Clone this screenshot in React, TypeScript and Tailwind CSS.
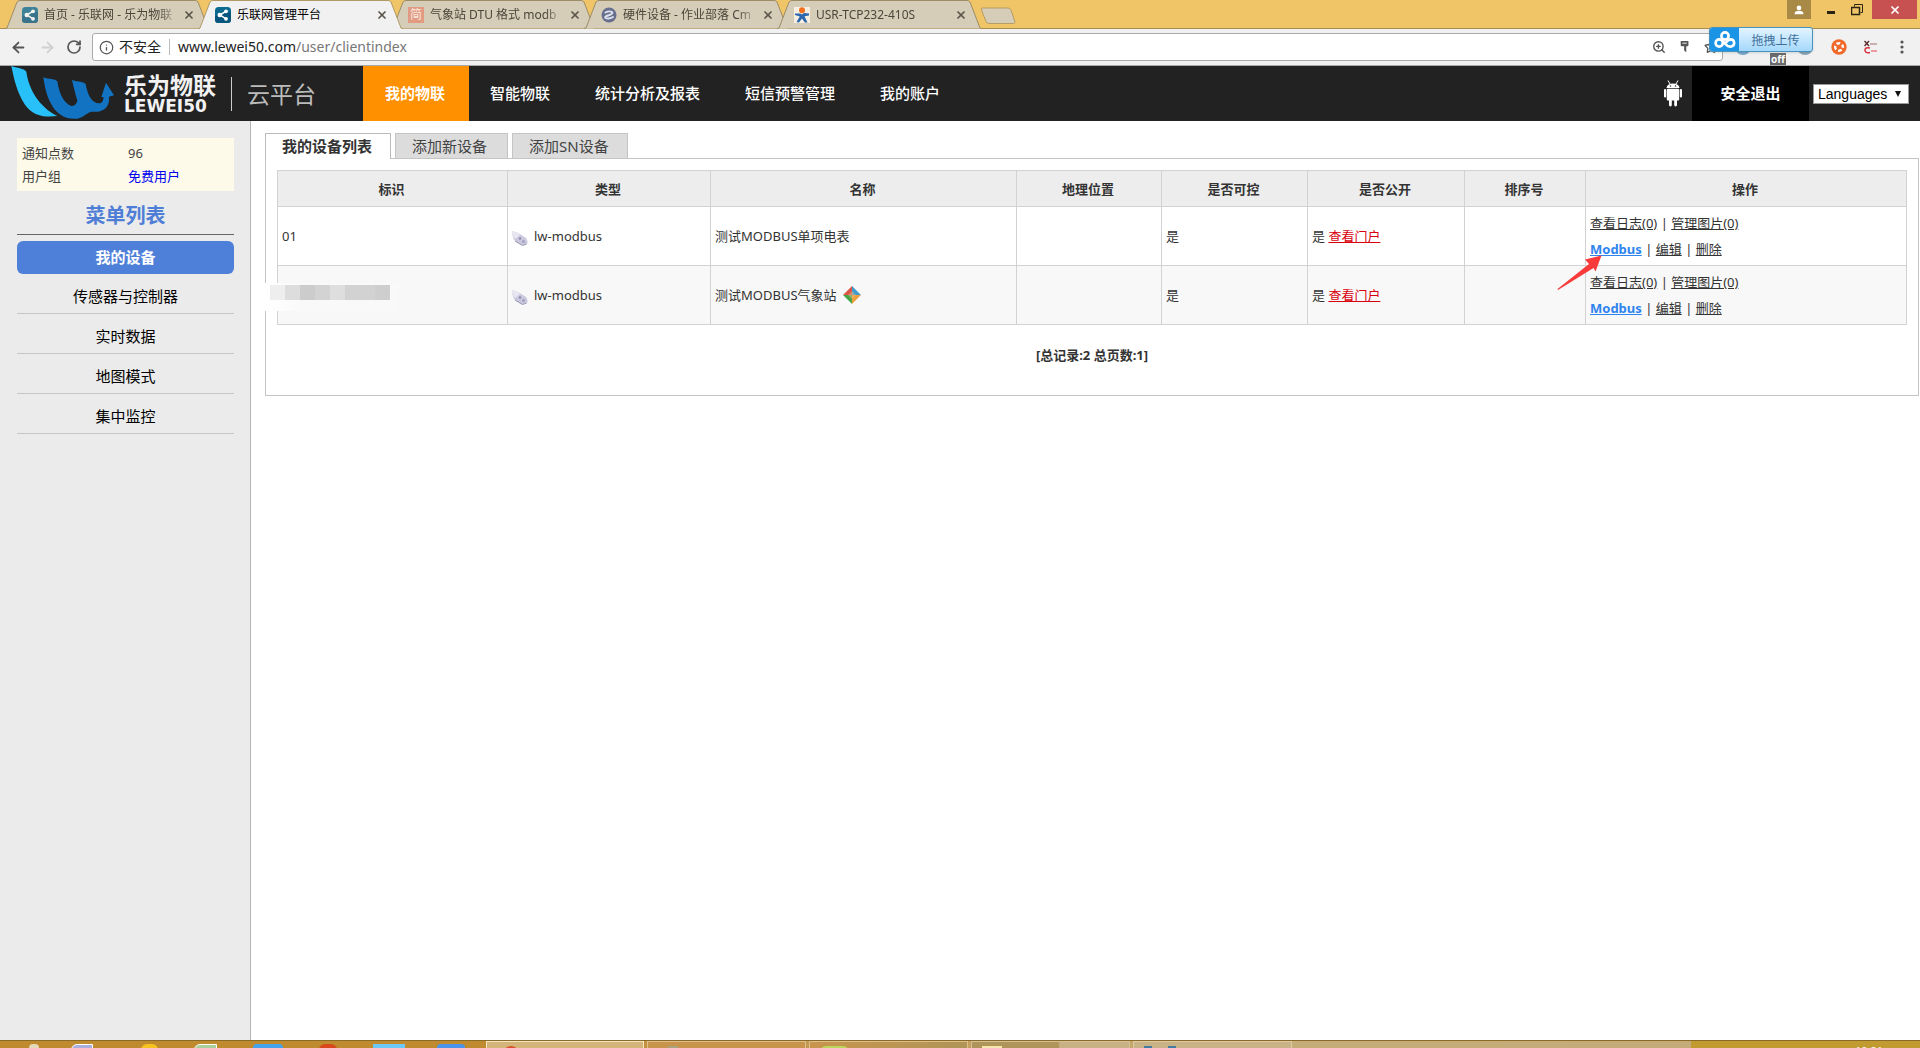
import type { ReactNode } from "react";
import { ArrowLeft, ArrowRight, RotateCw, Info, ZoomIn, Star, X } from "lucide-react";

type Tab = { title: string; icon: ReactNode; active?: boolean };

const ShareIcon = ({ dim }: { dim?: boolean }) => (
  <svg viewBox="0 0 16 16" className={dim ? "size-4 opacity-75" : "size-4"}>
    <rect width="16" height="16" rx="3.5" fill="#0b6a8f" />
    <path d="M0 9 L16 5 V12.500 Q16 16 12.500 16 H3.500 Q0 16 0 12.500Z" fill="#06567e" />
    <path d="M11 4.200 L5 8 L11 11.800" fill="none" stroke="#fff" strokeWidth="1.500" />
    <circle cx="11" cy="4.300" r="1.900" fill="#fff" />
    <circle cx="4.700" cy="8" r="2.200" fill="#fff" />
    <circle cx="11" cy="11.800" r="1.900" fill="#fff" />
  </svg>
);

const JianIcon = () => (
  <span className="grid size-4 place-items-center bg-[#e29a83] text-[12px] leading-4 text-[#f8e9df]">简</span>
);

const CmdIcon = () => (
  <svg viewBox="0 0 16 16" className="size-4">
    <circle cx="8" cy="8" r="7.500" fill="#666f8e" />
    <path d="M4.500 5.500 Q8 3.500 11 5 Q12.500 6.500 8.500 8 Q3 9.500 4.500 11 Q8 12.500 12 10" fill="none" stroke="#dfe3ee" strokeWidth="1.900" strokeLinecap="round" />
  </svg>
);

const UsrIcon = () => (
  <svg viewBox="0 0 16 16" className="size-4">
    <rect width="16" height="16" fill="#f6eee0" />
    <path d="M1 6.500 L6 6.500 L8 7.500 L10 6 L15 6.500 L15 8.500 L10.500 9.300 L13.500 15.500 L10.800 15.500 L8 11.500 L5 15.500 L2.500 15 L5.800 9.500 L1 8Z" fill="#2c67ad" />
    <circle cx="8" cy="3.200" r="3" fill="#f0701c" />
  </svg>
);

const browserTabs: Tab[] = [
  { title: "首页 - 乐联网 - 乐为物联", icon: <ShareIcon dim /> },
  { title: "乐联网管理平台", icon: <ShareIcon />, active: true },
  { title: "气象站 DTU 格式 modb", icon: <JianIcon /> },
  { title: "硬件设备 - 作业部落 Cm", icon: <CmdIcon /> },
  { title: "USR-TCP232-410S", icon: <UsrIcon /> },
];

function BrowserTab({ tab }: { tab: Tab }) {
  return (
    <div className={tab.active ? "relative z-10 -mr-3 h-[29px] w-[205px]" : "relative -mr-3 h-[29px] w-[205px]"}>
      <svg viewBox="0 0 205 29" className="absolute inset-0 size-full" aria-hidden="true">
        <path
          d="M0 28.500 L2 28 L12 2 Q13 0.500 15 0.500 H190 Q192 0.500 193 2 L203 28 L205 28.500"
          fill={tab.active ? "#f1f1f1" : "#d6cdb8"}
          stroke={tab.active ? "#b09a66" : "#9c8d67"}
        />
        {tab.active && <rect x="2" y="28" width="201" height="1" fill="#f1f1f1" />}
      </svg>
      <div className="relative flex h-[29px] items-center pr-[15px] pl-[17px]">
        {tab.icon}
        <a
          href="#tab"
          className={
            tab.active
              ? "ml-1.5 flex-1 text-[12px] leading-5 whitespace-nowrap text-black"
              : "ml-1.5 flex-1 mask-r-from-85% text-[12px] leading-5 whitespace-nowrap text-[#4b463b]"
          }
        >
          {tab.title}
        </a>
        <button aria-label="关闭标签页" className="ml-1 grid size-3 place-items-center">
          <X className="size-3 text-[#5c574c]" strokeWidth={3.5} />
        </button>
      </div>
    </div>
  );
}

function TitleBar() {
  return (
    <div className="flex h-[29px] shrink-0 border-b border-[#a88c50] bg-[#efc568] pl-[5px]">
      {browserTabs.map((t) => (
        <BrowserTab key={t.title} tab={t} />
      ))}
      <button aria-label="新标签页" className="ml-2.5 h-[29px]">
        <svg viewBox="0 0 36 29" className="h-[29px] w-9">
          <path d="M2 8 H28 Q30 8 31 10 L35 22 Q35 23.500 33.500 23.500 H9 Q7 23.500 6 21.500 L1.500 10 Q1 8 2 8Z" fill="#d6cdb8" stroke="#b59c65" />
        </svg>
      </button>
      <div className="ml-auto flex h-[19px] pr-[3px]">
        <button aria-label="用户" className="mr-3 grid w-6 place-items-center bg-[#a88945]">
          <svg viewBox="0 0 12 12" className="size-2.5" fill="#fff">
            <circle cx="6" cy="3.500" r="2.800" />
            <path d="M0.500 11 Q1 7 6 7 Q11 7 11.500 11Z" />
          </svg>
        </button>
        <button aria-label="最小化" className="w-4">
          <span className="mx-auto mt-1.5 block h-[3px] w-2 bg-[#2b2414]" />
        </button>
        <button aria-label="还原" className="mr-[7px] ml-2.5 grid w-4 place-items-center">
          <svg viewBox="0 0 12 12" className="size-3" fill="none" stroke="#2b2414">
            <path d="M3.500 2.500 V0.500 H11.500 V8.500 H9.500" />
            <path d="M0.500 3.500 H8.500 V10.500 H0.500Z" strokeWidth="1.500" />
          </svg>
        </button>
        <button aria-label="关闭" className="grid w-[45px] place-items-center bg-[#c75050]">
          <X className="size-3 text-white" strokeWidth={3.5} />
        </button>
      </div>
    </div>
  );
}

function UploadWidget() {
  return (
    <button className="absolute top-[-2px] right-[107px] z-20 flex h-[25px] w-[104px] overflow-hidden rounded-[3px] border border-[#4793bd] bg-linear-to-b from-[#e2f4ff] to-[#a5d8fb] shadow">
      <span className="grid h-full w-[29px] place-items-center bg-[#1c94e6]">
        <svg viewBox="0 0 22 18" className="h-[18px] w-[22px]" fill="none" stroke="#fff" strokeWidth="2.600">
          <circle cx="11" cy="5" r="3.600" />
          <circle cx="5.200" cy="12" r="3.600" />
          <path d="M8.500 10 L12 13.500 Q14 16 16.800 15.600 Q20.200 15 20.200 12 Q20 8.400 16.500 8.400 Q14.500 8.500 11.500 12" />
        </svg>
      </span>
      <span className="flex-1 text-center text-[12px] leading-[25px] text-[#3f6f98]">拖拽上传</span>
    </button>
  );
}

function Toolbar() {
  return (
    <div className="relative flex h-[37px] shrink-0 items-center border-b border-[#a9a9a9] bg-[#f1f1f1] pr-4 pl-2.5">
      <button aria-label="后退"><ArrowLeft className="size-[17px] text-[#555]" strokeWidth={2.5} /></button>
      <button aria-label="前进" className="ml-3"><ArrowRight className="size-[17px] text-[#d0d0d0]" strokeWidth={2.5} /></button>
      <button aria-label="重新加载" className="ml-2.5"><RotateCw className="size-4 text-[#555]" strokeWidth={2.6} /></button>
      <div className="ml-2.5 flex h-7 flex-1 items-center rounded-[3px] border border-[#aaa] bg-white pl-1.5">
        <Info className="size-[15px] text-[#555]" strokeWidth={2} />
        <span className="ml-[5px] text-[14px] leading-5 text-[#222]">不安全</span>
        <span className="mx-2 h-4 w-px bg-[#bbb]" />
        <a href="#address" className="flex-1 text-[14px] leading-5 text-[#777]">
          <span className="text-[#222]">www.lewei50.com</span>/user/clientindex
        </a>
        <ZoomIn className="size-3.5 text-[#555]" strokeWidth={2.4} />
        <svg viewBox="0 0 10 14" className="ml-3.5 h-3 w-2.5" fill="#555">
          <path d="M0 0 H9 V5 Q9 6 8 6 H6.500 V13 L4 11 V6 H1 Q0 6 0 5Z" />
          <rect x="2" y="2" width="5" height="1" fill="#fff" />
        </svg>
        <Star className="mr-1 ml-3.5 size-3.5 text-[#555]" strokeWidth={2.2} />
      </div>
      <div className="flex w-[181px] items-center">
        <span className="ml-3 size-4 rounded-full bg-[#7aa9c9]" />
        <span className="mt-6 ml-[19px] h-3 bg-[#6b6b6b] px-px text-[10px] leading-3 font-bold text-white">off</span>
        <span className="ml-[11px] size-4 rounded-full bg-[#8ba6b8]" />
        <svg viewBox="0 0 16 16" className="ml-[18px] size-4">
          <circle cx="8" cy="8" r="7.700" fill="#f0692a" />
          <circle cx="8" cy="8" r="3.800" fill="none" stroke="#fff" strokeWidth="2.400" strokeDasharray="3.800 2.170" strokeDashoffset="3" />
        </svg>
        <svg viewBox="0 0 14 14" className="ml-[17px] size-3.5" fill="none">
          <path d="M0.500 1 L5 6 M5 1 L0.500 6" stroke="#5c2b2b" strokeWidth="1.400" />
          <path d="M6 4 H13" stroke="#b99" strokeWidth="1.500" />
          <path d="M6 8 Q1 7 1 10 Q1 13.500 6 12.500" stroke="#d6303c" strokeWidth="1.500" />
          <path d="M7 11 H13" stroke="#ef9aa2" strokeWidth="2" />
        </svg>
        <svg viewBox="0 0 4 14" className="ml-auto h-3.5 w-1" fill="#555">
          <circle cx="2" cy="2" r="1.600" />
          <circle cx="2" cy="7" r="1.600" />
          <circle cx="2" cy="12" r="1.600" />
        </svg>
      </div>
      <UploadWidget />
    </div>
  );
}

const nav = ["我的物联", "智能物联", "统计分析及报表", "短信预警管理", "我的账户"];

function Header() {
  return (
    <header className="flex h-[55px] shrink-0 items-stretch bg-[#222]">
      <a href="#home" className="flex w-[363px] items-center">
        <svg viewBox="0 12 360 165" className="h-[55px] w-[120px]" aria-hidden="true">
          <path d="M34 12 C50 19 72 18 79 29 C86 82 118 135 172 162 C128 167 98 160 75 128 C50 90 42 50 34 12Z" fill="#27c0f8" />
          <path d="M130 46 C148 53 165 50 172 58 C178 98 192 124 214 132 Q228 132 232 116 C226 96 221 76 216 54 C236 61 250 58 257 66 C262 98 276 126 300 124 C309 121 311 113 310 105 L304 105 L318 62 L342 100 L327 104 C330 134 312 153 274 149 C262 151 250 166 232 170 C168 176 140 120 130 46Z" fill="#1173c2" />
        </svg>
        <span className="ml-1 flex flex-col text-[#f2f2f2]">
          <span className="text-[23px] leading-[26px] font-bold">乐为物联</span>
          <span className="font-['DejaVu_Sans',sans-serif] text-[17px] leading-[17px] font-bold">LEWEI50</span>
        </span>
        <span className="ml-[15px] h-[34px] w-px bg-[#ccc]" />
        <span className="ml-[15px] text-[23px] leading-7 text-[#bbb]">云平台</span>
      </a>
      <nav className="flex">
        {nav.map((n, i) => (
          <a
            key={n}
            href="#nav"
            className={
              i === 0
                ? "flex items-center bg-[#ff9000] pr-6 pl-[22px] text-[15px] font-bold text-white"
                : "flex items-center pr-6 pl-[21px] text-[15px] font-medium text-white"
            }
          >
            {n}
          </a>
        ))}
      </nav>
      <div className="ml-auto flex items-center">
        <svg viewBox="0 0 18 27" className="mr-2.5 h-[27px] w-[18px]" fill="#fff">
          <path d="M2.500 8 Q3 3.500 9 3.500 Q15 3.500 15.500 8Z" />
          <path d="M4 0.500 L6 4 M14 0.500 L12 4" stroke="#fff" strokeWidth="1" />
          <rect x="2.800" y="8.800" width="12.400" height="11.700" rx="1" />
          <rect x="0" y="9" width="2.200" height="8.500" rx="1.100" />
          <rect x="15.800" y="9" width="2.200" height="8.500" rx="1.100" />
          <rect x="5" y="19" width="2.800" height="7.500" rx="1.400" />
          <rect x="10.200" y="19" width="2.800" height="7.500" rx="1.400" />
          <circle cx="6.500" cy="6" r="0.700" fill="#222" />
          <circle cx="11.500" cy="6" r="0.700" fill="#222" />
        </svg>
        <a href="#logout" className="flex h-full w-[117px] items-center justify-center bg-black text-[15px] font-bold text-white">安全退出</a>
        <div className="relative mr-[11px] ml-1">
          <select aria-label="Languages" className="block h-5 w-24 appearance-none border border-[#999] bg-white pl-1 font-['Liberation_Sans',sans-serif] text-[14px] leading-4 text-black">
            <option>Languages</option>
          </select>
          <svg viewBox="0 0 6 6" className="pointer-events-none absolute top-[7px] right-2 size-1.5">
            <path d="M0 0 H6 L3 6Z" fill="#111" />
          </svg>
        </div>
      </div>
    </header>
  );
}

const menu = ["传感器与控制器", "实时数据", "地图模式", "集中监控"];

function Sidebar() {
  return (
    <aside className="w-[251px] shrink-0 border-r border-[#b5b5b5] bg-[#ebebeb] pt-[17px] pr-4 pl-[17px]">
      <dl className="grid grid-cols-[106px_1fr] bg-[#fdfaea] px-[5px] pt-1 pb-[3px] text-[13px] leading-[23px] text-[#444]">
        <dt>通知点数</dt>
        <dd>96</dd>
        <dt>用户组</dt>
        <dd><a href="#group" className="text-[#0000ee]">免费用户</a></dd>
      </dl>
      <h2 className="border-b border-[#666] pt-[11px] pb-1 text-center text-[20px] leading-7 font-bold text-[#4f7ed6]">菜单列表</h2>
      <nav className="pt-1.5 text-center text-[15px] text-black">
        <a href="#devices" className="block rounded-md bg-[#4f80d9] leading-[33px] font-bold text-white">我的设备</a>
        {menu.map((m) => (
          <a key={m} href="#menu" className="block border-b border-[#c6c6c6] pt-[5px] leading-[34px]">{m}</a>
        ))}
      </nav>
    </aside>
  );
}

const KeyDeviceIcon = () => (
  <svg viewBox="0 0 16 16" className="mt-1 mr-1 size-4 shrink-0">
    <path d="M0 1 L6 3 L14 8 Q16.500 11.500 15 14 L10 15.500 L2 10 L0 4Z" fill="#c9c8dd" />
    <path d="M0 1 L6 3 L8 5 L3 9 L0 4Z" fill="#e8e7f1" />
    <path d="M3 11 L10.500 15.500 L14.500 14" fill="none" stroke="#9896b4" />
    <circle cx="8" cy="8.500" r="1.200" fill="#8e8cae" />
    <circle cx="11.500" cy="11.500" r="1.500" fill="#a3a1c0" />
  </svg>
);

const DiamondIcon = () => (
  <svg viewBox="0 0 18 18" className="ml-1 size-[18px] shrink-0">
    <path d="M9 0 L0 9 H9Z" fill="#dd5546" />
    <path d="M9 0 L18 9 H9Z" fill="#3f9bd0" />
    <path d="M0 9 L9 18 V9Z" fill="#46a549" />
    <path d="M18 9 L9 18 V9Z" fill="#eda03a" />
    <path d="M9 5 L13 9 L9 13 L5 9Z" fill="#e9b98a" opacity="0.500" />
  </svg>
);

const columns = ["标识", "类型", "名称", "地理位置", "是否可控", "是否公开", "排序号", "操作"];
const devices = [
  { id: "01", name: "测试MODBUS单项电表", starred: false },
  { id: "", name: "测试MODBUS气象站", starred: true },
];

const Redacted = () => (
  <span className="absolute top-[17px] -left-[14px] flex h-7 w-[134px] bg-linear-to-r from-white via-[#f9f9f9] via-30% to-[#f9f9f9] pt-0.5 pl-1.5">
    <span className="h-[15px] w-[15px] bg-[#eee]" />
    <span className="h-[15px] w-[15px] bg-[#ddd]" />
    <span className="h-[15px] w-[15px] bg-[#ccc]" />
    <span className="h-[15px] w-[15px] bg-[#d3d3d3]" />
    <span className="h-[15px] w-[15px] bg-[#dedede]" />
    <span className="h-[15px] w-[30px] bg-[#d2d2d2]" />
    <span className="h-[15px] w-[15px] bg-[#cecece]" />
  </span>
);

const PointerArrow = () => (
  <svg viewBox="0 0 45 36" className="pointer-events-none absolute top-[48px] -left-[29px] z-10 h-9 w-[45px]" aria-hidden="true">
    <path d="M44.500 0.500 L28 4.500 L32 9 L0.500 34 L1 35 L36.500 13 L38.500 16.500Z" fill="#f83a3a" />
  </svg>
);

function DeviceTable() {
  return (
    <table className="w-full table-fixed border-collapse text-[13px] leading-[26px] text-[#333]">
      <colgroup>
        <col className="w-[230px]" />
        <col className="w-[203px]" />
        <col className="w-[306px]" />
        <col className="w-[145px]" />
        <col className="w-[146px]" />
        <col className="w-[157px]" />
        <col className="w-[121px]" />
        <col className="w-[321px]" />
      </colgroup>
      <thead>
        <tr className="h-9 bg-[#ededed]">
          {columns.map((c) => (
            <th key={c} className="border border-[#d2d2d2] pr-0.5 font-bold">{c}</th>
          ))}
        </tr>
      </thead>
      <tbody>
        {devices.map((d, i) => (
          <tr key={d.name} className="h-[59px] even:bg-[#f8f8f8] [&>td]:border [&>td]:border-[#d2d2d2] [&>td]:px-1">
            <td className="relative">{d.id || <Redacted />}</td>
            <td><span className="flex items-center gap-0.5"><KeyDeviceIcon />lw-modbus</span></td>
            <td><span className="flex items-center gap-0.5">{d.name}{d.starred && <DiamondIcon />}</span></td>
            <td />
            <td>是</td>
            <td>是 <a href="#portal" className="text-[#d9000d] underline">查看门户</a></td>
            <td />
            <td className="relative">
              <div><a href="#log" className="underline">查看日志(0)</a> | <a href="#pictures" className="underline">管理图片(0)</a></div>
              <div><a href="#modbus" className="font-bold text-[#2f84ee] underline">Modbus</a> | <a href="#edit" className="underline">编辑</a> | <a href="#delete" className="underline">删除</a></div>
              {i === 0 && <PointerArrow />}
            </td>
          </tr>
        ))}
      </tbody>
    </table>
  );
}

function Content() {
  return (
    <main className="min-w-0 flex-1 bg-white pt-3 pr-px pl-[14px]">
      <div className="flex gap-1 text-[15px] leading-6">
        <a href="#list" className="relative z-10 -mb-px border border-b-0 border-[#bbb] bg-white pr-[18px] pl-4 font-bold text-[#333]">我的设备列表</a>
        <a href="#add" className="border border-b-0 border-[#c4c4c4] bg-[#dcdcdc] pr-5 pl-4 text-[#444]">添加新设备</a>
        <a href="#add-sn" className="border border-b-0 border-[#c4c4c4] bg-[#dcdcdc] pr-[18px] pl-4 text-[#444]">添加SN设备</a>
      </div>
      <section className="h-[238px] border border-[#c4c4c4] px-[11px] pt-[11px]">
        <DeviceTable />
        <p className="pt-[17px] text-center text-[13px] leading-[26px] font-bold text-[#333]">[总记录:2 总页数:1]</p>
      </section>
    </main>
  );
}

function Taskbar() {
  return (
    <footer className="flex h-2 shrink-0 overflow-hidden border-t border-[#8a6a28] bg-linear-to-r from-[#c08a2e] from-25% via-[#c6ad78] via-68% to-[#c4a977]">
      <div className="flex w-[486px] shrink-0 items-start gap-9 pt-[3px] pl-[29px]">
        <span className="h-3 w-2.5 rounded-t-sm bg-[#e5d9b8]" />
        <span className="-ml-1 h-3 w-[22px] rounded-tl-md border border-white bg-[#a9aede]" />
        <span className="ml-3 h-3 w-[17px] rounded-full bg-[#f6c321]" />
        <span className="h-3 w-[23px] rounded-tl-md border border-white bg-[#a9cf9a]" />
        <span className="h-3 w-[30px] rounded-sm bg-[#46a3ee]" />
        <span className="h-3 w-[18px] rounded-full bg-[#d9481c]" />
        <span className="h-3 w-8 bg-[#6cc8f4]" />
        <span className="-ml-1 h-3 w-7 rounded-sm bg-[#4a94ec]" />
      </div>
      <div className="flex flex-1 items-start gap-[3px]">
        <button aria-label="Chrome" className="h-7 w-[158px] border border-[#f4e6c0] bg-[#d4b478] pt-1 pl-4"><span className="block h-6 w-4 rounded-full bg-[#d9502f]" /></button>
        <button aria-label="任务 2" className="h-7 w-[159px] border border-[#dfc08a] bg-[#c8934a] pt-1 pl-5"><span className="block h-6 w-2.5 bg-[#aaa47c]" /></button>
        <button aria-label="任务 3" className="h-7 w-[159px] border border-[#dfc08a] bg-linear-to-r from-[#c8954c] to-[#af9558] pt-1 pl-2.5"><span className="block h-6 w-[29px] rounded-t-md bg-[#b9d85c]" /></button>
        <button aria-label="任务 4" className="h-7 w-[159px] border border-[#d5c199] bg-linear-to-r from-[#b0955a] from-55% to-[#c8b184] to-56% pt-1 pl-2.5"><span className="block h-6 w-5 bg-[#f3e6ae]" /></button>
        <button aria-label="任务 5" className="flex h-7 w-[159px] gap-4 border border-[#dccaa3] bg-[#c9b386] pt-1 pl-2.5"><span className="h-5 w-2 border-2 border-[#427aa0]" /><span className="h-5 w-2 border-2 border-[#427aa0]" /></button>
      </div>
      <div className="w-[229px] shrink-0 bg-[#c19a30] pt-1 pr-[37px] text-right text-[11px] leading-3 text-white">10:21</div>
    </footer>
  );
}

export default function App() {
  return (
    <div className="flex h-screen flex-col overflow-hidden bg-white font-['Noto_Sans','Noto_Sans_CJK_SC',sans-serif]">
      <TitleBar />
      <Toolbar />
      <Header />
      <div className="flex min-h-0 flex-1">
        <Sidebar />
        <Content />
      </div>
      <Taskbar />
    </div>
  );
}
